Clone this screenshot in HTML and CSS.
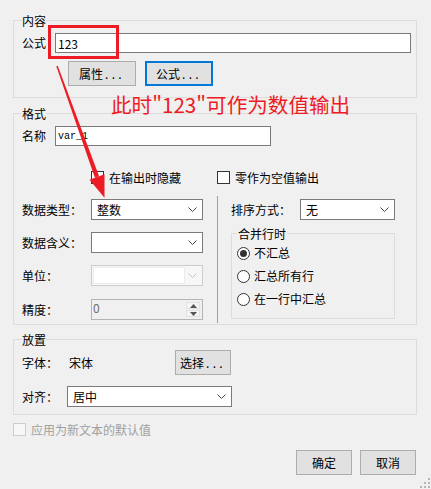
FILE: index.html
```html
<!DOCTYPE html>
<html lang="zh-CN">
<head>
  <meta charset="UTF-8">
  <title>文本属性</title>
  <link rel="stylesheet" href="styles.css">
</head>
<body>
  <div class="dialog">
    <fieldset class="group group-content">
      <legend>内容</legend>
      <div class="row">
        <span class="lbl lbl-short">公式</span>
        <input class="edit edit-wide" type="text" value="123">
      </div>
      <div class="row btn-row">
        <button class="btn">属性<span class="dots">...</span></button>
        <button class="btn btn-focus">公式<span class="dots">...</span></button>
      </div>
    </fieldset>

    <fieldset class="group group-format">
      <legend>格式</legend>
      <div class="row">
        <span class="lbl lbl-short">名称</span>
        <input class="edit edit-name" type="text" value="var_1">
      </div>
      <div class="checks">
        <span class="check check-first"><span class="box"></span>在输出时隐藏</span>
        <span class="check"><span class="box"></span>零作为空值输出</span>
      </div>
      <div class="cols">
        <div class="col-left">
          <div class="field">
            <span class="lbl lbl-wide">数据类型：</span>
            <div class="combo"><span>整数</span><svg width="9" height="5"><path d="M0.5 0.5 L4.5 4.5 L8.5 0.5" stroke="#444" fill="none"/></svg></div>
          </div>
          <div class="field">
            <span class="lbl lbl-wide">数据含义：</span>
            <div class="combo"><span></span><svg width="9" height="5"><path d="M0.5 0.5 L4.5 4.5 L8.5 0.5" stroke="#444" fill="none"/></svg></div>
          </div>
          <div class="field">
            <span class="lbl lbl-wide">单位：</span>
            <div class="combo combo-off"><span class="combo-inner"></span><svg width="9" height="5"><path d="M0.5 0.5 L4.5 4.5 L8.5 0.5" stroke="#c4c4c4" fill="none"/></svg></div>
          </div>
          <div class="field field-last">
            <span class="lbl lbl-wide">精度：</span>
            <div class="spin">
              <span class="spin-val">0</span>
              <span class="spin-btns">
                <span class="spin-up"><svg width="7" height="4"><path d="M0 4 L3.5 0 L7 4 Z" fill="#555"/></svg></span>
                <span class="spin-down"><svg width="7" height="4"><path d="M0 0 L3.5 4 L7 0 Z" fill="#555"/></svg></span>
              </span>
            </div>
          </div>
        </div>
        <div class="sep"></div>
        <div class="col-right">
          <div class="field">
            <span class="lbl lbl-wide">排序方式：</span>
            <div class="combo combo-sort"><span>无</span><svg width="9" height="5"><path d="M0.5 0.5 L4.5 4.5 L8.5 0.5" stroke="#444" fill="none"/></svg></div>
          </div>
          <fieldset class="group group-merge">
            <legend>合并行时</legend>
            <div class="radio"><span class="circle on"></span>不汇总</div>
            <div class="radio"><span class="circle"></span>汇总所有行</div>
            <div class="radio"><span class="circle"></span>在一行中汇总</div>
          </fieldset>
        </div>
      </div>
    </fieldset>

    <fieldset class="group group-place">
      <legend>放置</legend>
      <div class="row place-font">
        <span class="lbl lbl-font">字体：</span>
        <span class="font-name">宋体</span>
        <button class="btn btn-small">选择<span class="dots">...</span></button>
      </div>
      <div class="row place-align">
        <span class="lbl lbl-align">对齐：</span>
        <div class="combo combo-align"><span>居中</span><svg width="9" height="5"><path d="M0.5 0.5 L4.5 4.5 L8.5 0.5" stroke="#444" fill="none"/></svg></div>
      </div>
    </fieldset>

    <div class="check check-off"><span class="box"></span>应用为新文本的默认值</div>

    <div class="footer">
      <button class="btn btn-small">确定</button>
      <button class="btn btn-small">取消</button>
    </div>

    <svg class="grip" width="12" height="12">
      <rect x="9" y="1" width="2" height="2" fill="#b5b5b5"/>
      <rect x="9" y="5" width="2" height="2" fill="#b5b5b5"/>
      <rect x="5" y="5" width="2" height="2" fill="#b5b5b5"/>
      <rect x="9" y="9" width="2" height="2" fill="#b5b5b5"/>
      <rect x="5" y="9" width="2" height="2" fill="#b5b5b5"/>
      <rect x="1" y="9" width="2" height="2" fill="#b5b5b5"/>
    </svg>

    <!-- annotation drawn over the dialog -->
    <div class="mark-box"></div>
    <svg class="mark-arrow" width="431" height="489">
      <polygon points="57.7,65.8 56.3,66.2 94.9,177.8 99.1,176.2" fill="#ed1c24"/>
      <polygon points="104.5,174.3 89.5,179.7 104.5,197.7" fill="#ed1c24"/>
    </svg>
    <div class="mark-text">此时"123"可作为数值输出</div>
  </div>
</body>
</html>
```

FILE: styles.css
```css
* {
  box-sizing: border-box;
}
body {
  margin: 0;
  background-color: #f0f0f0;
  color: #000000;
  font-family: "Noto Sans CJK SC", "Noto Sans", sans-serif;
  font-size: 12px;
  line-height: 16px;
}
.dialog {
  position: relative;
  width: 431px;
  height: 489px;
  padding: 13px 14px 0 13px;
  overflow: hidden;
}

/* group boxes */
.group {
  margin: 0;
  min-width: 0;
  padding: 5px 5px 11px 8px;
  border: 1px solid #dcdcdc;
}
.group legend {
  padding: 0;
  font-size: 12px;
  line-height: 15px;
}
.group-format {
  margin-top: 8px;
  padding-bottom: 1px;
}
.group-place {
  margin-top: 7px;
  padding-top: 3px;
  padding-bottom: 7px;
}
.group-merge {
  width: 164px;
  margin-top: 6px;
  padding: 4px 4px 11px 5px;
}
.group-merge legend {
  padding: 0 1px;
}

.row {
  display: flex;
  align-items: center;
}
.lbl {
  flex: none;
  white-space: nowrap;
}
.lbl-short { width: 33px; }
.lbl-wide { width: 69px; }
.lbl-font { width: 47px; }
.lbl-align { width: 45px; }

.edit {
  height: 20px;
  margin: 0;
  padding: 0 2px;
  border: 1px solid #7a7a7a;
  background: #ffffff;
  font-family: inherit;
  font-size: 12px;
  color: #000000;
  outline: none;
}
.edit-wide {
  flex: 1;
  min-width: 0;
}
.edit-name {
  width: 216px;
  font-family: "Liberation Mono", monospace;
  font-size: 10px;
}

/* buttons */
.btn-row {
  margin-top: 8px;
  padding-left: 46px;
  gap: 9px;
}
.btn {
  width: 68px;
  height: 25px;
  margin: 0;
  padding: 0;
  background: #e1e1e1;
  border: 1px solid #adadad;
  color: #000000;
  font-family: inherit;
  font-size: 12px;
  line-height: 16px;
}
.btn-focus {
  border: 2px solid #0078d7;
}
.btn-small {
  width: 56px;
}
.dots {
  letter-spacing: 3.3px;
  margin-left: 2px;
}

/* check boxes */
.checks {
  display: flex;
  margin-top: 25px;
  padding-left: 69px;
}
.check {
  display: flex;
  align-items: center;
  height: 13px;
  line-height: 13px;
}
.check-first {
  width: 126px;
}
.box {
  flex: none;
  width: 13px;
  height: 13px;
  margin-right: 5px;
  border: 1px solid #333333;
  background: #ffffff;
}
.check-off {
  margin-top: 8px;
  color: #a0a0a0;
}
.check-off .box {
  border-color: #cccccc;
  background: #f7f7f7;
}

/* two columns */
.cols {
  display: flex;
  margin-top: 12px;
}
.col-left {
  width: 195px;
  padding: 3px 0 3px 0;
}
.sep {
  width: 1px;
  background: #a0a0a0;
}
.col-right {
  width: 164px;
  margin-left: 13px;
  padding-top: 3px;
}
.field {
  display: flex;
  align-items: center;
  height: 21px;
}
.field + .field {
  margin-top: 12px;
}
.field-last {
  margin-top: 13px !important;
}

.combo {
  display: flex;
  align-items: center;
  justify-content: space-between;
  width: 112px;
  height: 21px;
  padding: 0 5px 0 5px;
  border: 1px solid #7a7a7a;
  background: #ffffff;
}
.combo svg {
  flex: none;
}
.combo-sort { width: 95px; }
.combo-align {
  width: 165px;
  height: 21px;
}
.combo-off {
  padding: 1px 5px 1px 1px;
  border-color: #cccccc;
  background: #f7f7f7;
  align-items: stretch;
}
.combo-off svg {
  align-self: center;
}
.combo-inner {
  width: 92px;
  border: 1px solid #ececec;
  background: #ffffff;
}

.spin {
  display: flex;
  justify-content: space-between;
  width: 112px;
  height: 21px;
  border: 1px solid #b4b4b4;
  background: #f0f0f0;
}
.spin-val {
  padding-left: 1px;
  line-height: 16px;
  color: #6d6d6d;
}
.spin-btns {
  display: flex;
  flex-direction: column;
  justify-content: center;
  gap: 1px;
  width: 14px;
  margin-right: 2px;
}
.spin-up, .spin-down {
  display: flex;
  align-items: center;
  justify-content: center;
  height: 7px;
  border: 1px solid #e2e2e2;
  background: #f4f4f4;
}

/* radios */
.radio {
  display: flex;
  align-items: center;
  height: 16px;
}
.radio + .radio {
  margin-top: 7px;
}
.circle {
  position: relative;
  flex: none;
  width: 13px;
  height: 13px;
  margin-right: 4px;
  border: 1px solid #333333;
  border-radius: 50%;
  background: #ffffff;
}
.circle.on::after {
  content: "";
  position: absolute;
  left: 2px;
  top: 2px;
  width: 7px;
  height: 7px;
  border-radius: 50%;
  background: #333333;
}

/* placement group */
.font-name {
  width: 106px;
}
.place-align {
  margin-top: 11px;
}

.footer {
  display: flex;
  justify-content: flex-end;
  gap: 8px;
  margin-top: 14px;
  margin-right: 1px;
}
.grip {
  position: absolute;
  right: 0;
  bottom: 0;
}

/* red annotation */
.mark-box {
  position: absolute;
  left: 48px;
  top: 25px;
  width: 71px;
  height: 34px;
  border: 3px solid #ed1c24;
}
.mark-arrow {
  position: absolute;
  left: 0;
  top: 0;
  pointer-events: none;
}
.mark-text {
  position: absolute;
  left: 111px;
  top: 93px;
  color: #ed1c24;
  font-size: 20.6px;
  line-height: 23px;
  white-space: nowrap;
}
```
